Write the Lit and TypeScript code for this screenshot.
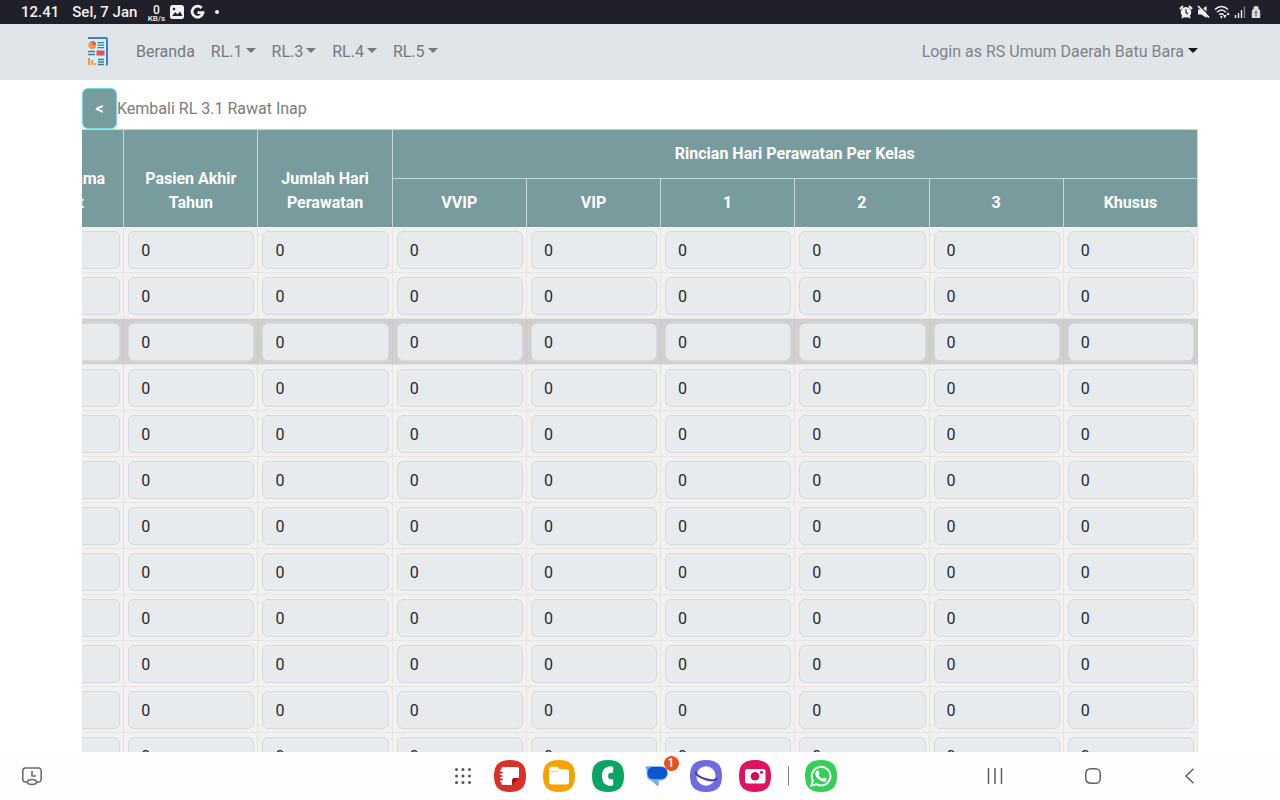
import { LitElement, html, css, svg } from "lit";
import { customElement, state } from "lit/decorators.js";
import { classMap } from "lit/directives/class-map.js";

const squircle = "M16 0C27 0 32 5 32 16S27 32 16 32 0 27 0 16 5 0 16 0Z";

const apps = [
  {
    name: "Notes",
    fill: "#dc2f2a",
    art: svg`<path fill="#fff" d="M9 7h14.500A1.500 1.500 0 0 1 25 8.500V18h-4a3 3 0 0 0-3 3v4H9a1.500 1.500 0 0 1-1.500-1.500v-15A1.500 1.500 0 0 1 9 7Z"/>
      <path fill="#a81517" d="M25 18 18 25v-4a3 3 0 0 1 3-3Z"/>
      <path fill="none" stroke="#dc2f2a" stroke-width="1.200" stroke-linecap="round" d="M7 12.500h1.500M7 16h1.500M7 19.500h1.500"/>
      <path fill="none" stroke="#fff" stroke-width="1.200" stroke-linecap="round" d="M6.500 10.700H8M6.500 14.200H8M6.500 17.700H8M6.500 21.200H8"/>`,
  },
  {
    name: "My Files",
    fill: "#f6a200",
    art: svg`<path fill="#fff" d="M8.300 6.700h5.500c1 0 1.500.5 2 1.200l.8 1.400h7.400c1.300 0 2 .8 2 2V22c0 1.500-1 2.500-2.500 2.500h-15C7 24.500 6 23.500 6 22V9C6 7.600 7 6.700 8.300 6.700Z"/>
      <path fill="none" stroke="#f8b840" stroke-width=".8" d="M6.500 11.300h7.300c1.200 0 1.700-.6 2.500-1.700"/>`,
  },
  {
    name: "Phone",
    fill: "#08a567",
    art: svg`<path fill="#fff" d="M19.300 6.200c1.200 0 1.900.8 1.900 1.900v3.200c0 1.100-.7 1.800-1.900 1.800h-1.500c-1.100 0-1.600.9-1.600 2.900s.5 2.900 1.600 2.900h1.500c1.200 0 1.900.7 1.900 1.800v3.200c0 1.100-.7 1.900-1.900 1.900-6.600 0-9.300-3.800-9.300-9.800s2.700-9.800 9.300-9.800Z"/>`,
  },
  {
    name: "Messages",
    fill: "#fff",
    badge: 1,
    art: svg`<path fill="#79a8fb" d="M5.500 6.200H20a6.500 6.500 0 0 1 6.500 6.500v1.200a6.500 6.500 0 0 1-6.500 6.500h-2.300v4.900c0 .9-.7 1.200-1.400.6l-5.800-5.500C7 20 5.800 17.500 5.800 14.500V11L4.500 7.600c-.3-.8.2-1.400 1-1.400Z"/>
      <path fill="#0b57d0" d="M12 7h8.500a5.500 5.500 0 0 1 0 12H12c-3.500 0-5.500-2.200-5.500-6S8.500 7 12 7Z"/>`,
  },
  {
    name: "Internet",
    fill: "#7069e2",
    art: svg`<circle cx="16" cy="16" r="9.700" fill="#fff"/>
      <path fill="none" stroke="#4b40ad" stroke-width="2.200" stroke-linecap="round" d="M6.200 12.200c-1 2.300 3.500 5.300 9.300 6.900 5.500 1.500 10 1.500 10.800-.3"/>`,
  },
  {
    name: "Camera",
    fill: "#e0115f",
    art: svg`<rect x="6" y="9" width="20.500" height="14.500" rx="2.500" fill="#fff"/>
      <circle cx="16" cy="16.200" r="4.300" fill="#d10c55"/><circle cx="22.500" cy="12.300" r="1.500" fill="#d10c55"/>`,
  },
];

@customElement("status-bar")
class StatusBar extends LitElement {
  static styles = css`
    :host { display: flex; align-items: center; justify-content: space-between; flex: none; height: 24px; padding: 0 18px 0 21px; background: #1f2029; color: #f1f1f3; font: 500 15px/24px Roboto, sans-serif; }
    .group { display: flex; align-items: center; }
    .date { margin: 0 10px 0 13px; }
    .rate { display: flex; flex-direction: column; align-items: center; width: 18px; font-size: 12px; line-height: 10px; padding-top: 3px; }
    .unit { font-size: 8px; line-height: 8px; }
    svg { display: block; }
    .picture { margin: 0 5px 0 4px; }
    .dot { width: 4px; height: 4px; margin-left: 10px; border-radius: 50%; background: #f1f1f3; }
    .right { gap: 4px; }
  `;
  render() {
    return html`
      <div class="group">
        <span>12.41</span><span class="date">Sel, 7 Jan</span>
        <span class="rate"><span>0</span><span class="unit">KB/s</span></span>
        <svg class="picture" width="16" height="16" viewBox="0 0 16 16"><rect x="1" y="1" width="14" height="14" rx="2.500" fill="#f1f1f3"/><path fill="#1f2029" d="m3 12 3.300-4 2.200 2.500L11 7.500l2.500 4.500Z"/><circle cx="5" cy="5" r="1.300" fill="#1f2029"/></svg>
        <svg width="15" height="16" viewBox="0 0 15 16"><path fill="none" stroke="#f1f1f3" stroke-width="2.800" d="M11.700 4A5.500 5.500 0 1 0 13 8.600H7.500"/></svg>
        <span class="dot"></span>
      </div>
      <div class="group right">
        <svg width="14" height="14" viewBox="0 0 14 14"><path stroke="#f1f1f3" stroke-width="2" d="m1 4 3-3M13 4l-3-3M3 13l1.500-2M11 13l-1.500-2"/><circle cx="7" cy="7.300" r="5.200" fill="#f1f1f3"/><path fill="none" stroke="#1f2029" stroke-width="1.200" d="M7 4.300v3.300l2 1.300"/></svg>
        <svg width="13" height="14" viewBox="0 0 13 14"><path fill="#f1f1f3" d="M1 4.500h3.500L9.500 1v12l-5-3.500H1Z"/><path stroke="#1f2029" stroke-width="1.300" d="m2 0 11 11"/><path stroke="#f1f1f3" stroke-width="1.800" d="m1 1 11 11.500"/></svg>
        <svg width="16" height="14" viewBox="0 0 16 14"><path fill="none" stroke="#f1f1f3" stroke-width="1.500" d="M1 4.500c4-4 9-4 13 0M3 7.200c3-3 6-3 9 0M5.200 9.800c1.400-1.400 3-1.400 4.400 0"/><path fill="#f1f1f3" d="m9 10 2 3.500 1.500-3.500ZM12.500 10 14 7l1.700 3ZM7.300 10.500l1.500 1.500-1.500 1.500L6 12Z"/></svg>
        <svg width="12" height="14" viewBox="0 0 12 14"><path stroke="#f1f1f3" stroke-width="1.400" d="M1.500 13v-3M4.500 13V8M7.500 13V5"/><path stroke="#85868c" stroke-width="1.400" d="M10.500 13V1.500"/></svg>
        <svg width="12" height="14" viewBox="0 0 12 14"><path fill="#dcdce0" d="M3.500 4V2.500C3.500 1.500 4.500 1 6 1s2.500.5 2.500 1.500V4c1.300.7 1.700 1.800 1.700 3.500V13H1.800V7.500c0-1.700.4-2.800 1.700-3.500Z"/><path fill="#6c6d74" d="m6 5 1.700 3.500H4.300ZM5.200 9.500h1.600v1.800H5.200Z"/></svg>
      </div>`;
  }
}

@customElement("site-nav")
class SiteNav extends LitElement {
  static styles = css`
    :host { display: block; flex: none; background: #e0e5e9; color: #74797c; font: 16px/24px Roboto, sans-serif; }
    .inner { display: flex; align-items: center; box-sizing: border-box; height: 56px; max-width: 1140px; margin: 0 auto; padding: 0 12px; }
    .brand { display: block; padding: 0 20px 0 6px; }
    .brand svg { display: block; }
    .links { display: flex; flex: 1; }
    a { color: inherit; text-decoration: none; white-space: nowrap; }
    .link { padding: 8px; }
    .account { color: #808385; }
    .caret { display: inline-block; margin-left: 4px; vertical-align: 4px; border: 5px solid transparent; border-top-color: currentColor; border-bottom: 0; }
    .link .caret { margin-left: 3px; }
    .account .caret { color: #111418; }
  `;
  render() {
    return html`<nav class="inner">
      <a class="brand" href="#" aria-label="Laporan">
        <svg width="20" height="30" viewBox="0 0 20 30"><path fill="#d4f0fb" d="M0 2h18v26H0Z"/><path fill="#3c80c9" d="M0 0h18.500L20 1.500V28l-2 1V2H0Z"/><circle cx="4.200" cy="8" r="3.900" fill="#f79a3e"/><path fill="#e9574d" d="M4.200 8V4.100A3.900 3.900 0 0 1 8.100 8Z"/><path stroke="#407d91" stroke-width="1.300" d="M9.500 5.700H16M9.500 8.200H16M9.500 10.600H16M0 14.500h7M0 17.500h7M10 22.500h6M10 25h6M10 27.500h6"/><rect x="8.500" y="13.500" width="8" height="5" fill="#e84f50"/><path fill="#f79a3e" d="M0 21h2.200v7H0ZM3.200 23h2v5h-2ZM6.200 26h2v2h-2Z"/></svg>
      </a>
      <div class="links">
        <a class="link" href="#">Beranda</a>
        ${["RL.1", "RL.3", "RL.4", "RL.5"].map((t) => html`<a class="link" href="#">${t}<span class="caret"></span></a>`)}
      </div>
      <a class="account" href="#">Login as RS Umum Daerah Batu Bara<span class="caret"></span></a>
    </nav>`;
  }
}

@customElement("care-table")
class CareTable extends LitElement {
  @state() private active = 2;

  private classes = ["VVIP", "VIP", "1", "2", "3", "Khusus"];
  private totals = ["Jumlah Lama Dirawat", "Pasien Akhir Tahun", "Jumlah Hari Perawatan"];

  static styles = css`
    :host { display: block; flex: 1; min-height: 0; overflow: auto; scrollbar-width: none; font: 16px/24px Roboto, sans-serif; }
    table { width: 100%; min-width: 1208px; table-layout: fixed; border-collapse: separate; border-spacing: 0; border-top: 1px solid #c6d7d8; }
    th { box-sizing: border-box; padding: 12px 14px; background: #789c9d; color: #fff; font-weight: 700; vertical-align: bottom; border-right: 1px solid #c6d7d8; }
    .span { border-bottom: 1px solid #c6d7d8; }
    td { padding: 4px 3px 3px 4px; background: #f2f1f1; border: solid #e7e4e2; border-width: 0 1px 1px 0; }
    .active td { background: #d0d0d0; border-right-color: #cac9c7; }
    input { display: block; box-sizing: border-box; width: 100%; height: 38px; padding: 6px 12px; border: 1px solid #d6dade; border-radius: 6px; background: #e8ebee; color: #25292d; font: inherit; }
  `;

  firstUpdated() {
    this.scrollLeft = this.scrollWidth;
  }

  render() {
    const columns = [...this.totals, ...this.classes];
    return html`<table>
      <thead>
        <tr>
          ${this.totals.map((t) => html`<th rowspan="2" scope="col">${t}</th>`)}
          <th class="span" colspan="6" scope="colgroup">Rincian Hari Perawatan Per Kelas</th>
        </tr>
        <tr>${this.classes.map((t) => html`<th scope="col">${t}</th>`)}</tr>
      </thead>
      <tbody>
        ${Array.from({ length: 14 }, (_, r) => html`<tr class=${classMap({ active: r === this.active })} @mouseenter=${() => (this.active = r)}>
          ${columns.map((c) => html`<td><input type="text" inputmode="numeric" value="0" aria-label=${`${c}, baris ${r + 1}`} /></td>`)}
        </tr>`)}
      </tbody>
    </table>`;
  }
}

@customElement("task-bar")
class TaskBar extends LitElement {
  static styles = css`
    :host { display: grid; grid-template-columns: 1fr auto 1fr; align-items: center; flex: none; height: 48px; background: #fefefe; font: 500 12px/14px Roboto, sans-serif; }
    button { position: relative; display: block; padding: 0; border: 0; background: none; font: inherit; }
    svg { display: block; }
    .recent { padding-left: 21px; }
    .dock { display: flex; align-items: center; gap: 17px; padding-left: 10px; }
    .all { margin-right: 5px; }
    .line { width: 1px; height: 20px; margin-right: -1px; background: #85858a; }
    .badge { position: absolute; top: -4px; right: -6px; width: 15px; height: 15px; border-radius: 50%; background: #e8501e; color: #fff; line-height: 15px; text-align: center; }
    .keys { display: flex; align-items: center; justify-content: flex-end; gap: 82px; padding-right: 85px; }
  `;
  render() {
    return html`
      <div class="recent"><button aria-label="Layar terakhir"><svg width="22" height="20" viewBox="0 0 22 20" fill="none" stroke="#6b6b6b" stroke-width="1.600"><path d="M6 16H4.500A2.700 2.700 0 0 1 1.800 13.300V4.700A2.700 2.700 0 0 1 4.500 2h13a2.700 2.700 0 0 1 2.700 2.700v8.600a2.700 2.700 0 0 1-2.700 2.700H16M11 5v5h4"/><ellipse cx="11" cy="16" rx="4.500" ry="2.500"/></svg></button></div>
      <div class="dock">
        <button class="all" aria-label="Semua aplikasi"><svg width="18" height="18" viewBox="0 0 18 18" fill="#55555a">${[2.5, 9, 15.5].map((y) => [2.5, 9, 15.5].map((x) => svg`<circle cx=${x} cy=${y} r="1.500"/>`))}</svg></button>
        ${apps.map((a) => html`<button aria-label=${a.name}><svg width="32" height="32" viewBox="0 0 32 32"><path fill=${a.fill} d=${squircle}/>${a.art}</svg>${a.badge ? html`<span class="badge">${a.badge}</span>` : null}</button>`)}
        <span class="line"></span>
        <button aria-label="WhatsApp"><svg width="32" height="32" viewBox="0 0 32 32"><path fill="#34cf57" d=${squircle}/><path fill="none" stroke="#fff" stroke-width="2" d="m6.500 25.500 1.400-5A9.300 9.300 0 1 1 11.500 24.200Z"/><path fill="#fff" d="M12.500 10.500c.6 0 .9 0 1.100.6l.9 2.100c.2.500-.7 1.400-1 1.800.9 1.800 2.200 3 4 3.800.5-.4 1.200-1.500 1.600-1.300l2.200 1.100c.5.200.4.600.3 1.100-.4 1.500-2 2.100-3.300 1.900-4-.7-7.600-4.300-8-7.300-.2-1.600.9-3.800 2.200-3.800Z"/></svg></button>
      </div>
      <div class="keys">
        <button aria-label="Aplikasi terkini"><svg width="16" height="16" viewBox="0 0 16 16"><path stroke="#626262" stroke-width="1.500" d="M1.500 0v16M8 0v16M14.500 0v16"/></svg></button>
        <button aria-label="Beranda"><svg width="16" height="16" viewBox="0 0 16 16"><rect x=".8" y=".8" width="14.400" height="14.400" rx="4.500" fill="none" stroke="#626262" stroke-width="1.500"/></svg></button>
        <button aria-label="Kembali"><svg width="12" height="16" viewBox="0 0 12 16"><path fill="none" stroke="#626262" stroke-width="1.500" d="M10.500.8 3 8l7.500 7.200"/></svg></button>
      </div>`;
  }
}

@customElement("app-root")
class AppRoot extends LitElement {
  static styles = css`
    :host { display: flex; flex-direction: column; height: 100vh; overflow: hidden; background: #fff; font: 16px/24px Roboto, sans-serif; }
    .page { display: flex; flex: 1; flex-direction: column; box-sizing: border-box; width: 100%; min-height: 0; max-width: 1140px; margin: 0 auto; padding: 8px 12px 0; }
    .head { display: flex; align-items: center; flex: none; color: #7c7c7c; }
    .back { box-sizing: border-box; width: 35px; height: 41px; padding: 0; border: 1px solid #71dcdf; border-radius: 6px; background: #789c9d; color: #fff; font: 700 16px/24px Roboto, sans-serif; }
    .title { margin: 0; font: inherit; line-height: 24px; }
  `;
  render() {
    return html`
      <status-bar></status-bar>
      <site-nav></site-nav>
      <main class="page">
        <div class="head">
          <button class="back" aria-label="Kembali">&lt;</button>
          <h1 class="title">Kembali RL 3.1 Rawat Inap</h1>
        </div>
        <care-table></care-table>
      </main>
      <task-bar></task-bar>`;
  }
}
